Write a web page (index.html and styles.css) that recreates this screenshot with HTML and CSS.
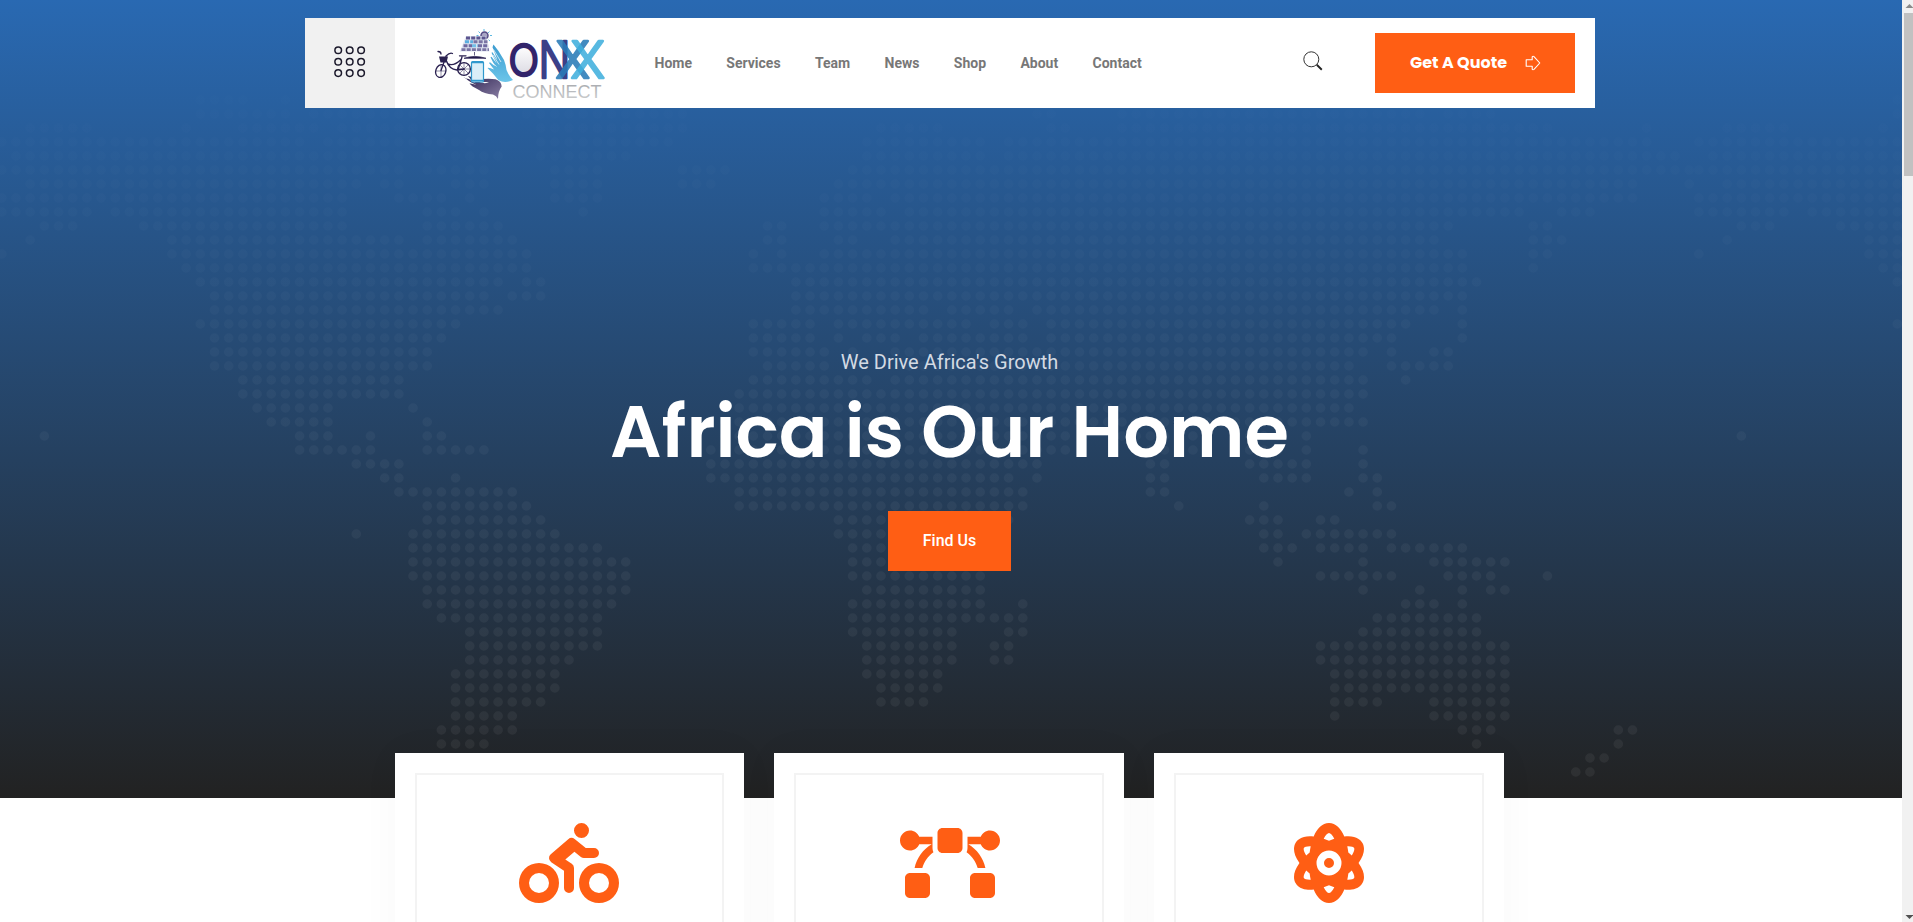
FILE: index.html
```html
<!DOCTYPE html>
<html lang="en">
<head>
<meta charset="utf-8">
<title>Onyx Connect</title>
<link rel="stylesheet" href="styles.css">
</head>
<body>
<div class="page">
<main class="content">
  <section class="hero">
    <svg class="hero-map" width="1902" height="798" viewBox="0 0 1902 798" aria-hidden="true">
      <defs>
        <linearGradient id="dotFade" gradientUnits="userSpaceOnUse" x1="0" y1="0" x2="0" y2="48">
          <stop offset="0" stop-color="#fff" stop-opacity=".006"/>
          <stop offset=".25" stop-color="#fff" stop-opacity=".02"/>
          <stop offset=".55" stop-color="#fff" stop-opacity=".04"/>
          <stop offset="1" stop-color="#fff" stop-opacity=".055"/>
        </linearGradient>
        <path id="map" d="M14 0H17.1M20 0h.1
        M14 1H20.1M22 1H25.1M26 1H32.1M37 1H48.1M73 1H74.1M79 1H98.1M99 1H100.1M102 1H105.1
        M2 2H6.1M13 2h.1M17 2H22.1M24 2H33.1M38 2H48.1M62 2H66.1M74 2H75.1M79 2H109.1M116 2h.1
        M0 3H21.1M23 3H33.1M38 3H47.1M61 3H69.1M71 3H116.1
        M1 4H28.1M30 4h.1M32 4H35.1M38 4H44.1M61 4H69.1M71 4H118.1
        M0 5H28.1M30 5H34.1M39 5H42.1M48 5H51.1M60 5H119.1
        M2 6H25.1M27 6H28.1M32 6H34.1M39 6H42.1M48 6H50.1M59 6H115.1M119 6h.1
        M0 7H24.1M28 7H31.1M33 7h.1M39 7H42.1M58 7H61.1M63 7H115.1
        M0 8H6.1M8 8H24.1M30 8H32.1M34 8h.1M41 8h.1M58 8H62.1M64 8H107.1M110 8H112.1
        M3 9H5.1M10 9H24.1M30 9H35.1M54 9H55.1M58 9H102.1M108 9H109.1
        M2 10h.1M12 10H28.1M30 10H36.1M54 10H55.1M59 10H60.1M63 10H101.1M108 10H110.1
        M0 11h.1M12 11H37.1M53 11h.1M55 11h.1M58 11H103.1M108 11H109.1
        M13 12H37.1M53 12H103.1M108 12h.1
        M14 13H35.1M37 13H38.1M56 13H104.1
        M15 14H34.1M36 14H38.1M56 14H103.1
        M15 15H35.1M56 15H65.1M67 15H71.1M73 15H101.1M103 15h.1
        M14 16H32.1M53 16H57.1M59 16H68.1M70 16H72.1M74 16H99.1M103 16h.1
        M15 17H31.1M53 17H57.1M59 17h.1M61 17H63.1M65 17H72.1M74 17H98.1M103 17h.1
        M15 18H30.1M53 18H58.1M60 18h.1M63 18H96.1M98 18h.1M101 18H102.1
        M15 19H30.1M54 19H58.1M64 19H95.1M98 19H102.1
        M17 20H28.1M53 20H61.1M63 20H96.1M99 20h.1
        M17 21H28.1M52 21H96.1
        M18 22H23.1M29 22h.1M52 22H95.1
        M19 23H23.1M30 23h.1M51 23H96.1
        M3 24h.1M21 24H23.1M26 24h.1M30 24H31.1M51 24H75.1M79 24H85.1M87 24H90.1M92 24h.1
        M21 25H26.1M30 25H34.1M50 25H75.1M80 25H84.1M88 25H90.1M92 25h.1M96 25h.1
        M25 26H28.1M50 26H73.1M81 26H82.1M88 26H92.1M96 26h.1
        M27 27H28.1M32 27h.1M50 27H71.1M73 27h.1M81 27H82.1M89 27H92.1M96 27H97.1
        M28 28H36.1M52 28H72.1M81 28H82.1M95 28h.1M97 28h.1
        M30 29H37.1M52 29H72.1M83 29h.1M89 29h.1M97 29H98.1
        M30 30H38.1M59 30H71.1M88 30H90.1M93 30H94.1
        M25 31h.1M29 31H39.1M59 31H70.1M89 31H90.1M92 31H98.1
        M29 32H42.1M60 32H70.1M89 32H91.1M93 32H96.1M98 32H103.1
        M29 33H44.1M60 33H70.1M90 33h.1M96 33h.1M101 33H106.1
        M29 34H44.1M60 34H69.1M93 34H98.1M102 34H105.1M109 34h.1
        M30 35H44.1M61 35H69.1M96 35h.1M100 35h.1M103 35h.1M105 35H106.1
        M30 36H43.1M60 36H69.1M72 36h.1M99 36H101.1M103 36h.1
        M31 37H42.1M60 37H72.1M97 37H104.1
        M33 38H42.1M60 38H67.1M71 38H72.1M96 38H104.1
        M33 39H42.1M61 39H67.1M70 39H71.1M93 39H106.1
        M33 40H40.1M61 40H67.1M70 40H71.1M93 40H106.1
        M32 41H39.1M61 41H66.1M94 41H106.1
        M32 42H39.1M62 42H66.1M94 42H106.1
        M32 43H38.1M62 43H65.1M94 43H97.1M101 43H106.1
        M32 44H36.1M94 44h.1M101 44H106.1
        M31 45H36.1M103 45H105.1M114 45H115.1
        M31 46H34.1M104 46h.1M114 46h.1
        M112 47H113.1M111 48H112.1"/>
      </defs>
      <g class="map-dots">
        <use href="#map" transform="translate(1.8 100) scale(14.18 14)"/>
        <use href="#map" transform="translate(1698.8 100) scale(14.18 14)"/>
      </g>
    </svg>

    <header class="header">
      <button class="menu-btn" aria-label="Menu">
        <svg width="32" height="32" viewBox="0 0 32 32"><g fill="none" stroke="#1c1a2c" stroke-width="1.5"><circle cx="4.2" cy="4.3" r="3.3"/><circle cx="15.7" cy="4.3" r="3.3"/><circle cx="27.1" cy="4.3" r="3.3"/><circle cx="4.2" cy="15.7" r="3.3"/><circle cx="15.7" cy="15.7" r="3.3"/><circle cx="27.1" cy="15.7" r="3.3"/><circle cx="4.2" cy="27.1" r="3.3"/><circle cx="15.7" cy="27.1" r="3.3"/><circle cx="27.1" cy="27.1" r="3.3"/></g></svg>
      </button>
      <a class="logo" aria-label="Onyx Connect">
        <svg width="180" height="85" viewBox="430 20 180 85">
          <defs>
            <linearGradient id="silver" x1="0" y1="0" x2="0" y2="1"><stop offset="0" stop-color="#a2a5a9"/><stop offset="1" stop-color="#cfd0d2"/></linearGradient>
            <linearGradient id="palm" x1="0" y1="0" x2="1" y2="1"><stop offset="0" stop-color="#2b2150"/><stop offset="1" stop-color="#8b80a5"/></linearGradient>
            <linearGradient id="palmBlue" x1="0" y1="0" x2="0" y2="1"><stop offset="0" stop-color="#3c9cd0"/><stop offset="1" stop-color="#6cc5e9"/></linearGradient>
            <linearGradient id="pearl" x1="0" y1="0" x2="0" y2="1"><stop offset="0" stop-color="#fff"/><stop offset="1" stop-color="#dcdbe3"/></linearGradient>
          </defs>
          <!-- sun -->
          <g stroke="#5cb9e2" stroke-width="1" fill="none"><path d="M484 28v2M478.500 30.500l1.500 1.500M489.500 30.500l-1.500 1.500M492 34.500h-2M490 40l-1.500-1.300M476.500 34.500h2"/></g>
          <circle cx="484.500" cy="34.500" r="3.500" fill="#a9a5c4" stroke="#554b85" stroke-width="1.500"/>
          <!-- solar panel -->
          <path d="M466 35H486L489.500 50.500H460Z" fill="#dde2ef"/>
          <g stroke-width="2.900" fill="none" stroke-dasharray="4 1.200"><path stroke="#5d5690" d="M466 37H487"/><path stroke="#5cafe0" d="M465 40.800H473"/><path stroke="#7a75a4" d="M473.500 40.800H487.500"/><path stroke="#6f69a0" d="M463.500 44.700H472"/><path stroke="#72bfe8" d="M472 44.700H478"/><path stroke="#6f69a0" d="M478 44.700H488.500"/><path stroke="#7a75a4" d="M461.500 48.600H489"/></g>
          <path d="M474.500 51V54.500M464 57.300Q474.500 53.500 486 57.300Z" fill="#241b4d" stroke="#241b4d" stroke-width=".7"/>
          <!-- bicycle -->
          <g fill="none" stroke="#2a2150" stroke-width="1.300" stroke-linecap="round"><ellipse cx="440.800" cy="70" rx="5" ry="6.600" transform="rotate(20 440.800 70)"/><circle cx="464" cy="68" r="6.400"/><path d="M441 69.500L446 55.500M438 50.500q3 0 3 2.500M446 55q4-4 6.500-2.500M446.500 60Q449 68 457 69L464 68M447.500 62.500Q453 66 460.500 59M458 69L462 56M459.500 54.800H466"/><path stroke-width=".5" d="M436 70h10M441 64v12M458 68h12M464 62v12M460 64l8 8M468 64l-8 8"/></g>
          <path d="M439 55.500h9l-1.500 6h-6Z" fill="#2a2150"/>
          <!-- hands -->
          <path d="M463.500 76.500q2-.3 12.500 6-6-4.500-8-7.500 2-.5 12 6.300 6 1.800 9-.3h-7.500q-1-2 1-3 7-.8 13 .2 6 2 6.200 7.300-3.800 5-3.700 12.500-1.500-3.500-5-4.500-9-.8-14-4.500-8-4-9.500-6.500 2-.5 7 1.500-9-4.500-10.500-6.500 1.500-.5 9 3-9-3-11.500-4Z" fill="url(#palm)"/>
          <path d="M493.500 43.500l5 6.500 5.500 9q2 5 2.500 10 3 7 6.500 10-8 3.800-14.500.2-4.500-6-11-12.200 1-1 6.500 1.500l-5-6.500 1-.8 5 4-4.500-9 1-.5 5 6.500-5-10.500 1-.5 5 8-5-13Z" fill="url(#palmBlue)"/>
          <path d="M493 54l6 9.500M493.500 48.500l7.500 12.500M490.500 60l6 5.500" stroke="#fff" stroke-width=".7" fill="none"/>
          <!-- phone -->
          <rect x="471.500" y="60.500" width="12" height="20.500" rx="1" fill="#d9eef8" stroke="#2f98cd" stroke-width="1.200"/><path d="M472 61.500h11M472 79.500h11" stroke="#2f98cd" stroke-width="1.500"/>
          <!-- wordmark -->
          <ellipse cx="523.800" cy="59" rx="11.500" ry="14.500" fill="url(#pearl)"/>
          <g class="wordmark">
            <text x="508.500" y="75" font-size="43" fill="#32246b" stroke="#32246b" textLength="30.500" lengthAdjust="spacingAndGlyphs">O</text>
            <text x="538.500" y="77.300" font-size="50" fill="#3b4088" stroke="#3b4088" textLength="32" lengthAdjust="spacingAndGlyphs">N</text>
            <text x="555.500" y="77.300" font-size="50" fill="#2a7cb8" stroke="#2a7cb8" textLength="34.500" lengthAdjust="spacingAndGlyphs" opacity=".88">X</text>
            <text x="570.500" y="77.300" font-size="50" fill="#41b0dd" stroke="#41b0dd" textLength="34.500" lengthAdjust="spacingAndGlyphs" opacity=".88">X</text>
          </g>
          <text class="tagline" x="512.500" y="96.500" textLength="89" lengthAdjust="spacingAndGlyphs" fill="url(#silver)">CONNECT</text>
        </svg>
      </a>
      <nav class="nav">
        <a>Home</a><a>Services</a><a>Team</a><a>News</a><a>Shop</a><a>About</a><a>Contact</a>
      </nav>
      <div class="actions">
        <svg class="search" width="20" height="20" viewBox="0 0 20 20"><circle cx="8.300" cy="8.300" r="7.500" fill="none" stroke="#333" stroke-width="1"/><path d="M13.800 13.800L18.800 18.700" stroke="#222" stroke-width="1.900"/></svg>
        <a class="quote"><span>Get A Quote</span>
          <svg width="16" height="16" viewBox="0 0 16 16"><path d="M1.200 4.700H7.200V1.800Q8 .8 9 1.600L14.800 8 9 14.400Q8 15.200 7.200 14.200V11.300H1.200Z" fill="none" stroke="#fff" stroke-width="1.100" stroke-linejoin="round"/></svg>
        </a>
      </div>
    </header>

    <div class="hero-text">
      <p class="kicker">We Drive Africa's Growth</p>
      <h1 class="title">Africa is Our Home</h1>
      <a class="find">Find Us</a>
    </div>
  </section>

  <section class="cards">
    <article class="card"><div class="card-frame">
      <svg width="100" height="80" viewBox="0 0 640 512"><path d="M400 96a48 48 0 1 0-48-48 48 48 0 0 0 48 48zm-4 121a31.900 31.900 0 0 0 20 7h64a32 32 0 0 0 0-64h-52.780L356 103a31.940 31.940 0 0 0-40.810.680l-112 96a32 32 0 0 0 3.080 50.920L288 305.120V416a32 32 0 0 0 64 0V288a32 32 0 0 0-14.250-26.620l-41.360-27.570 58.250-49.920zm116 39a128 128 0 1 0 128 128 128 128 0 0 0-128-128zm0 192a64 64 0 1 1 64-64 64 64 0 0 1-64 64zM128 256a128 128 0 1 0 128 128 128 128 0 0 0-128-128zm0 192a64 64 0 1 1 64-64 64 64 0 0 1-64 64z"/></svg>
    </div></article>
    <article class="card"><div class="card-frame">
      <svg width="100" height="80" viewBox="0 0 640 512"><path d="M368 32h-96c-17.670 0-32 14.330-32 32v96c0 17.670 14.330 32 32 32h96c17.670 0 32-14.330 32-32V64c0-17.670-14.330-32-32-32zM208 88h-84.750C113.750 64.560 90.840 48 64 48 28.660 48 0 76.650 0 112s28.660 64 64 64c26.840 0 49.750-16.560 59.250-40h79.730c-55.370 32.520-95.860 87.320-109.540 152h49.400c11.300-41.610 36.770-77.210 71.040-101.560-3.700-8.080-5.880-16.990-5.880-26.440V88zm-48 232H64c-17.670 0-32 14.330-32 32v96c0 17.670 14.330 32 32 32h96c17.670 0 32-14.330 32-32v-96c0-17.670-14.330-32-32-32zM576 48c-26.840 0-49.750 16.560-59.250 40H432v72c0 9.450-2.190 18.360-5.880 26.440 34.270 24.350 59.740 59.950 71.040 101.560h49.400c-13.680-64.680-54.170-119.480-109.540-152h79.730c9.500 23.440 32.410 40 59.250 40 35.340 0 64-28.650 64-64s-28.660-64-64-64zm0 272h-96c-17.670 0-32 14.330-32 32v96c0 17.670 14.330 32 32 32h96c17.670 0 32-14.330 32-32v-96c0-17.670-14.330-32-32-32z"/></svg>
    </div></article>
    <article class="card"><div class="card-frame">
      <svg width="70" height="80" viewBox="0 0 448 512"><path d="M224 224a32 32 0 1 0 32 32A32 32 0 0 0 224 224Zm214.170-96c-10.880-19.500-40.510-50.750-116.270-41.875C300.390 34.875 267.630 0 224 0s-76.390 34.875-97.900 86.125C50.340 77.375 20.710 108.500 9.830 128-6.550 157.375-5.170 201.125 34.960 256-5.170 310.875-6.550 354.625 9.830 384c29.130 52.375 101.650 43.625 116.270 41.875C147.610 477.125 180.360 512 224 512s76.390-34.875 97.900-86.125c14.630 1.750 87.140 10.500 116.270-41.875C454.550 354.625 453.175 310.875 413.040 256 453.175 201.125 454.550 157.375 438.170 128ZM63.340 352c-4-7.250-.125-24.750 15-48.250 6.880 6.500 14.130 12.875 21.880 19.125 1.625 13.750 4 27.125 6.750 40.125C82.340 363.875 67.090 358.625 63.340 352Zm36.880-162.875c-7.750 6.250-15 12.625-21.880 19.125-15.130-23.500-19-41-15-48.250 3.380-6.125 16.380-11.500 37.880-11.500 1.750 0 3.875.375 5.750.375C104.100 162.250 101.850 175.625 100.220 189.125ZM224 64c9.500 0 22.260 13.500 33.880 37.250-11.250 3.750-22.500 8-33.880 12.875-11.380-4.875-22.630-9.125-33.880-12.875C201.750 77.500 214.500 64 224 64Zm0 384c-9.500 0-22.250-13.500-33.880-37.250 11.250-3.750 22.500-8 33.880-12.875C235.380 402.750 246.630 407 257.880 410.750 246.250 434.500 233.500 448 224 448Zm0-112a80 80 0 1 1 80-80A80 80 0 0 1 224 336ZM384.660 352c-3.625 6.625-19 11.875-43.640 11 2.750-13 5.130-26.375 6.750-40.125 7.750-6.250 15-12.625 21.880-19.125C384.780 327.250 388.660 344.750 384.660 352ZM369.660 208.250c-6.875-6.500-14.130-12.875-21.880-19.125-1.625-13.500-3.875-26.875-6.750-40.250 1.875 0 4-.375 5.750-.375 21.500 0 34.510 5.375 37.880 11.500C388.660 167.250 384.780 184.750 369.660 208.250Z"/></svg>
    </div></article>
  </section>
</main>
<div class="scrollbar" aria-hidden="true">
  <svg width="15" height="12" viewBox="0 0 15 12"><path d="M3.500 8L7.500 4l4 4z" fill="#8a8a8a"/></svg>
  <div class="thumb"></div>
  <svg class="down" width="15" height="12" viewBox="0 0 15 12"><path d="M3.500 5L7.500 9l4-4z" fill="#505050"/></svg>
</div>
</div>
</body>
</html>
```
FILE: styles.css
```css
* { box-sizing: border-box; }
html, body { margin: 0; height: 922px; overflow: hidden; }
body { background: #fff; font-family: Roboto, "Liberation Sans", sans-serif; }

.page { display: flex; width: 1913px; height: 922px; overflow: hidden; }
.content { flex: none; width: 1902px; height: 922px; overflow: hidden; }

.hero {
  position: relative;
  height: 798px;
  padding: 18px 307px 0 305px;
  background: linear-gradient(#2969b2, #222);
}
.hero-map { position: absolute; left: 0; top: 0; }
.map-dots {
  fill: none;
  stroke: url(#dotFade);
  stroke-width: .68;
  stroke-linecap: round;
  stroke-dasharray: 0 1;
}

.header {
  position: relative;
  display: flex;
  align-items: center;
  height: 90px;
  background: #fff;
}
.menu-btn {
  display: flex;
  align-items: center;
  justify-content: center;
  width: 90px;
  height: 90px;
  padding: 0 0 3px;
  border: 0;
  background: #f1f1f1;
}
.logo { display: flex; margin-left: 35px; }
.wordmark { font-family: Inter, sans-serif; font-weight: 300; stroke-width: 2.4; stroke-linejoin: round; }
.tagline { font: 19px "Liberation Sans", sans-serif; }
.nav { display: flex; gap: 34.350px; margin-left: 44.500px; }
.nav a { color: #777; font-size: 14px; font-weight: 700; line-height: 20px; }
.actions { display: flex; align-items: center; gap: 52.500px; margin-left: auto; padding-right: 20px; }
.search { margin-bottom: 5px; }
.quote {
  display: flex;
  align-items: center;
  justify-content: space-between;
  width: 200px;
  height: 60px;
  padding: 0 34px 0 35px;
  background: #ff5e14;
  color: #fff;
  font: 700 16px Poppins, Inter, sans-serif;
  white-space: nowrap;
}
.quote span { padding-bottom: 2px; }
.quote svg { margin-bottom: 1px; }

.hero-text {
  position: relative;
  display: flex;
  flex-direction: column;
  align-items: center;
  padding: 239px 1px 0 0;
}
.kicker { margin: 0; color: #d3dae3; font-size: 20px; line-height: 30px; }
.title {
  margin: 10px 0 0;
  color: #fff;
  font: 600 72px/90px Poppins, Inter, sans-serif;
  white-space: nowrap;
}
.find {
  margin-top: 34px;
  width: 123px;
  height: 60px;
  background: #ff5e14;
  color: #fff;
  font-size: 16px;
  font-weight: 500;
  line-height: 59px;
  text-align: center;
}

.cards {
  position: relative;
  display: grid;
  grid-template-columns: repeat(3, 349.660px);
  gap: 30px;
  margin: -45px 0 0 394.600px;
}
.card { height: 300px; padding: 20px; background: #fff; box-shadow: 0 0 40px rgba(0, 0, 0, .03); }
.card-frame {
  display: flex;
  justify-content: center;
  height: 260px;
  padding-top: 48px;
  border: 2px solid #f3f3f3;
  fill: #ff5e14;
}
.card + .card svg { margin-left: 1px; }

.scrollbar { flex: none; display: flex; flex-direction: column; width: 15px; height: 922px; background: #f1f1f1; }
.thumb { width: 11px; height: 163px; margin: 1px 2px 0; background: #c1c1c1; }
.down { margin-top: auto; }
```
